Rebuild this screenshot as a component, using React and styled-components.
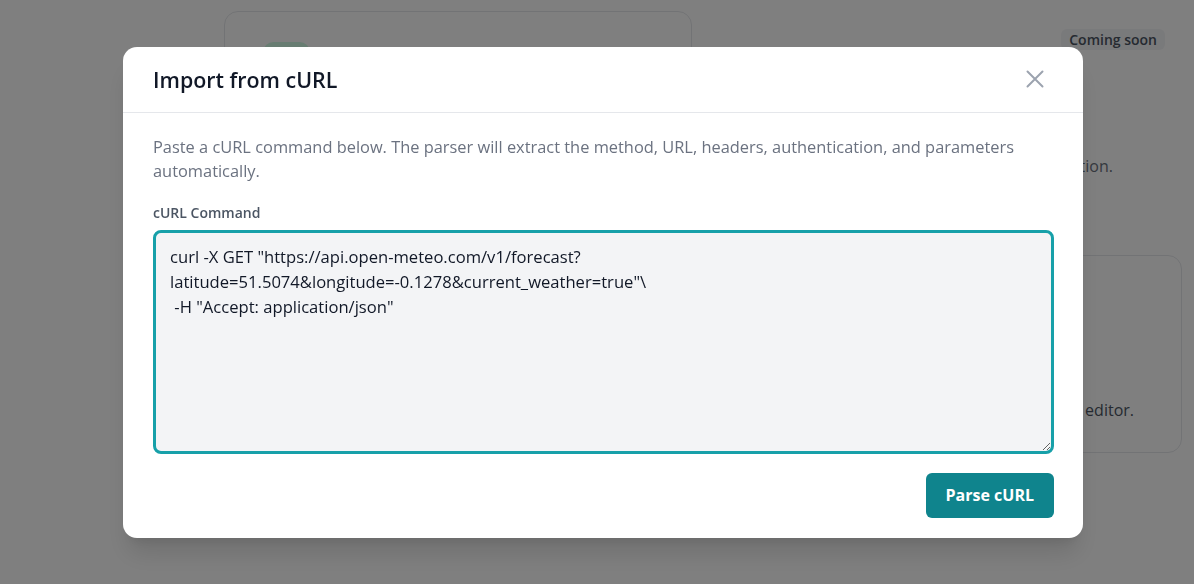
import React, { useState } from 'react'
import styled, { createGlobalStyle } from 'styled-components'

const GlobalStyle = createGlobalStyle`
    * { box-sizing: border-box; }
    html, body {
        margin: 0;
        padding: 0;
        background: #fff;
        font-family: "Open Sans", "Noto Sans", sans-serif;
        overflow: hidden;
    }
`

const CURL_TEXT = 'curl -X GET "https://api.open-meteo.com/v1/forecast?latitude=51.5074&longitude=-0.1278&current_weather=true"\\\n -H "Accept: application/json"'

const App = () => {
    const [command, setCommand] = useState(CURL_TEXT)

    return (
        <>
            <GlobalStyle />
            <Page>
                <Card $height={420}>
                    <Pill>REST</Pill>
                </Card>
                <Side>
                    <Badge>Coming soon</Badge>
                    <SideText>Action.</SideText>
                    <Card $height={198} $offset={77}>
                        <CardText>Use the editor.</CardText>
                    </Card>
                </Side>
            </Page>

            <Overlay>
                <Modal>
                    <Header>
                        <Title>Import from cURL</Title>
                        <CloseButton aria-label="Close">
                            <svg width="18" height="18" viewBox="0 0 18 18" fill="none">
                                <path d="M1.5 1.5L16.5 16.5M16.5 1.5L1.5 16.5" stroke="currentColor" strokeWidth="2" strokeLinecap="round" />
                            </svg>
                        </CloseButton>
                    </Header>
                    <Body>
                        <Description>
                            Paste a cURL command below. The parser will extract the method, URL, headers, authentication, and parameters automatically.
                        </Description>
                        <Label htmlFor="curl">cURL Command</Label>
                        <CommandInput
                            id="curl"
                            value={command}
                            onChange={(e) => setCommand(e.target.value)}
                            spellCheck={false}
                        />
                        <Footer>
                            <PrimaryButton>Parse cURL</PrimaryButton>
                        </Footer>
                    </Body>
                </Modal>
            </Overlay>
        </>
    )
}

export default App

const Page = styled.div`
    height: 100vh;
    display: grid;
    grid-template-columns: 468px 466px;
    column-gap: 24px;
    padding: 11px 0 0 224px;
    align-items: start;
`

const Card = styled.div`
    border: 1px solid #e5e7eb;
    border-radius: 14px;
    height: ${(p) => p.$height}px;
    margin-top: ${(p) => p.$offset || 0}px;
    padding: 30px 38px;
    display: flex;
    flex-direction: column;
    justify-content: flex-end;
`

const Pill = styled.span`
    align-self: flex-start;
    margin-bottom: auto;
    background: #d1fae5;
    color: #047857;
    font-size: 12px;
    padding: 2px 10px;
    border-radius: 999px;
`

const Side = styled.div`
    display: flex;
    flex-direction: column;
    padding-top: 18px;
`

const Badge = styled.span`
    align-self: flex-end;
    margin-right: 17px;
    background: #f3f4f6;
    color: #4b5563;
    font-size: 14px;
    font-weight: 600;
    padding: 1px 8px;
    border-radius: 6px;
`

const SideText = styled.p`
    margin: 104px 69px 0 0;
    text-align: right;
    color: #6b7280;
    font-size: 16px;
    line-height: 24px;
    white-space: nowrap;
`

const CardText = styled.p`
    margin: 0;
    text-align: right;
    color: #4b5563;
    font-size: 16px;
    line-height: 24px;
    white-space: nowrap;
    padding-right: 9px;
`

const Overlay = styled.div`
    position: fixed;
    inset: 0;
    background: rgba(0, 0, 0, 0.5);
    display: flex;
    align-items: center;
    justify-content: center;
    padding-left: 12px;
`

const Modal = styled.div`
    width: 960px;
    background: #fff;
    border-radius: 14px;
    box-shadow: 0 20px 25px -5px rgba(0, 0, 0, 0.12), 0 10px 10px -5px rgba(0, 0, 0, 0.06);
    overflow: hidden;
`

const Header = styled.div`
    display: flex;
    align-items: center;
    justify-content: space-between;
    padding: 20px 36px 20px 30px;
    border-bottom: 1px solid #e5e7eb;
`

const Title = styled.h2`
    margin: 0;
    font-size: 21.4px;
    line-height: 25px;
    font-weight: 600;
    color: #111827;
`

const CloseButton = styled.button`
    width: 24px;
    height: 24px;
    border: none;
    background: transparent;
    color: #9ca3af;
    display: flex;
    align-items: center;
    justify-content: center;
    padding: 0;
    cursor: pointer;
`

const Body = styled.div`
    display: flex;
    flex-direction: column;
    padding: 22px 29px 20px 30px;
`

const Description = styled.p`
    margin: 0;
    font-size: 16.4px;
    line-height: 24px;
    color: #6b7280;
`

const Label = styled.label`
    margin-top: 20px;
    font-size: 14px;
    line-height: 20px;
    font-weight: 600;
    color: #4b5563;
`

const CommandInput = styled.textarea`
    margin-top: 7px;
    height: 224px;
    width: 100%;
    border: 3px solid #17a0a9;
    border-radius: 8px;
    background: #f3f4f6;
    padding: 11px 14px;
    font-family: inherit;
    font-size: 16.6px;
    line-height: 25px;
    color: #111827;
    outline: none;
    resize: vertical;
`

const Footer = styled.div`
    display: flex;
    justify-content: flex-end;
    margin-top: 19px;
`

const PrimaryButton = styled.button`
    height: 45px;
    padding: 0 20px;
    border: none;
    border-radius: 6px;
    background: #0f848d;
    color: #fff;
    font-family: inherit;
    font-size: 16px;
    font-weight: 700;
    cursor: pointer;
`
